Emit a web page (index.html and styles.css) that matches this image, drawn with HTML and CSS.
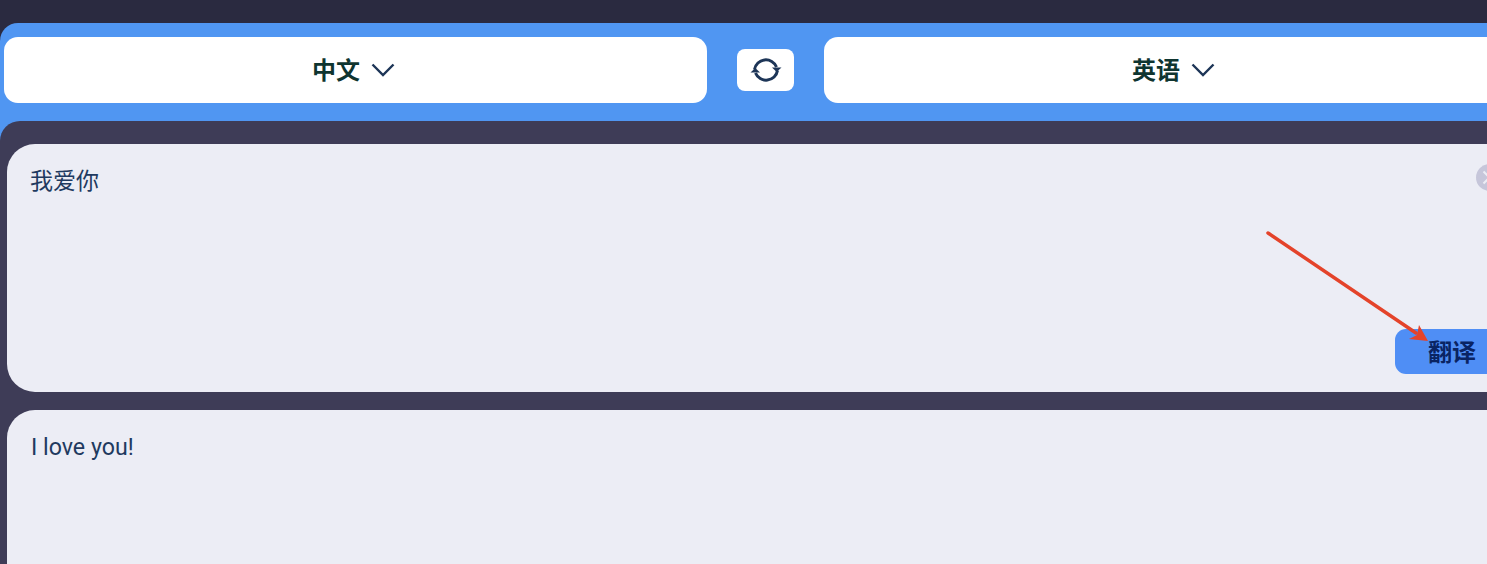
FILE: index.html
```html
<!DOCTYPE html>
<html lang="zh-CN">
<head>
  <meta charset="UTF-8">
  <meta name="viewport" content="width=device-width, initial-scale=1.0">
  <title>翻译</title>
  <link rel="stylesheet" href="styles.css">
</head>
<body>
  <div class="app">
    <!-- 语言选择 -->
    <div class="lang-bar">
      <div class="lang-select">
        <span>中文</span>
        <svg class="chevron" viewBox="0 0 24 14"><path d="M1.5 1.5 12 12 22.5 1.5"/></svg>
      </div>
      <button class="swap-btn" type="button">
        <svg viewBox="0 0 32 28">
          <path class="swap-line" d="M4.5 13.5A11.5 11.5 0 0 1 26.5 11"/>
          <path class="swap-line" d="M27.5 14.5A11.5 11.5 0 0 1 5.5 17"/>
          <path class="swap-head" d="M22 11.500h9.500L26.700 16z"/>
          <path class="swap-head" d="M0.500 16.500h9.500L5.300 12z"/>
        </svg>
      </button>
      <div class="lang-select">
        <span>英语</span>
        <svg class="chevron" viewBox="0 0 24 14"><path d="M1.5 1.5 12 12 22.5 1.5"/></svg>
      </div>
    </div>

    <!-- 翻译内容 -->
    <div class="panel">
      <div class="card card-input">
        <p class="card-text">我爱你</p>
        <span class="clear-btn">
          <svg viewBox="0 0 27 27"><path d="M7.500 7.500l12 12M19.500 7.500l-12 12"/></svg>
        </span>
        <button class="translate-btn" type="button">翻译</button>
      </div>
      <div class="card card-output">
        <p class="card-text card-result">I love you!</p>
      </div>
    </div>
  </div>

  <!-- 标注箭头 -->
  <svg class="note-arrow" viewBox="0 0 1487 564">
    <path class="note-line" d="M1268 233 1416 333"/>
    <path class="note-head" d="M1428 341 1409 339 1417 335 1419 325z"/>
  </svg>
</body>
</html>
```

FILE: styles.css
```css
* {
  margin: 0;
  padding: 0;
  box-sizing: border-box;
}

html, body {
  height: 100%;
  overflow: hidden;
}

body {
  background-color: #2a2a40;
  font-family: Roboto, "Noto Sans CJK SC", sans-serif;
  padding-top: 23px;
}

.app {
  width: 1531px;
  height: 100%;
  display: flex;
  flex-direction: column;
  background-color: #5096f2;
  border-radius: 18px 18px 0 0;
}

/* Language bar */
.lang-bar {
  display: flex;
  align-items: center;
  gap: 30px;
  padding: 14px 4px 18px;
}

.lang-select {
  flex: 1;
  height: 66px;
  display: flex;
  justify-content: center;
  align-items: center;
  gap: 11px;
  background-color: #fff;
  border-radius: 14px;
  color: #0f3530;
  font-family: "Noto Sans CJK SC", sans-serif;
  font-size: 24px;
  font-weight: 700;
  line-height: 30px;
  padding-right: 4px;
}

.lang-select span {
  padding-bottom: 2px;
}

.chevron {
  width: 24px;
  height: 14px;
  fill: none;
  stroke: #1d3557;
  stroke-width: 2.4;
}

.swap-btn {
  width: 57px;
  height: 42px;
  display: flex;
  justify-content: center;
  align-items: center;
  background-color: #fff;
  border: none;
  border-radius: 8px;
}

.swap-btn svg {
  width: 32px;
  height: 28px;
}

.swap-line {
  fill: none;
  stroke: #1d3557;
  stroke-width: 3;
}

.swap-head {
  fill: #1d3557;
}

/* Cards */
.panel {
  flex: 1;
  min-height: 0;
  display: flex;
  flex-direction: column;
  gap: 18px;
  background-color: #3e3c57;
  border-radius: 20px 20px 0 0;
  padding: 23px 7px 0;
}

.card {
  position: relative;
  display: flex;
  flex-direction: column;
  background-color: #ecedf5;
  border-radius: 28px;
  padding: 18px 23px 18px;
}

.card-input {
  height: 248px;
}

.card-output {
  flex: 1;
  min-height: 0;
  border-radius: 28px 28px 0 0;
}

.card-text {
  color: #1f3a60;
  font-family: "Noto Sans CJK SC", sans-serif;
  font-size: 23px;
  line-height: 34px;
}

.card-result {
  font-family: Roboto, sans-serif;
  font-size: 23.2px;
  padding: 2px 0 0 1px;
}

.clear-btn {
  position: absolute;
  top: 20px;
  right: 21px;
  width: 27px;
  height: 27px;
  background-color: #c6c6da;
  border-radius: 50%;
}

.clear-btn svg {
  display: block;
  fill: none;
  stroke: #ecedf5;
  stroke-width: 2;
}

.translate-btn {
  align-self: flex-end;
  width: 114px;
  height: 45px;
  margin-top: auto;
  margin-right: -8px;
  padding: 0 0 3px 0;
  background-color: #4f8ef5;
  border: none;
  border-radius: 11px;
  color: #0a2463;
  font-family: "Noto Sans CJK SC", sans-serif;
  font-size: 24px;
  font-weight: 700;
}

/* Annotation */
.note-arrow {
  position: absolute;
  top: 0;
  left: 0;
  width: 1487px;
  height: 564px;
  pointer-events: none;
}

.note-line {
  fill: none;
  stroke: #e4432a;
  stroke-width: 3.500;
  stroke-linecap: round;
}

.note-head {
  fill: #e4432a;
}
```
